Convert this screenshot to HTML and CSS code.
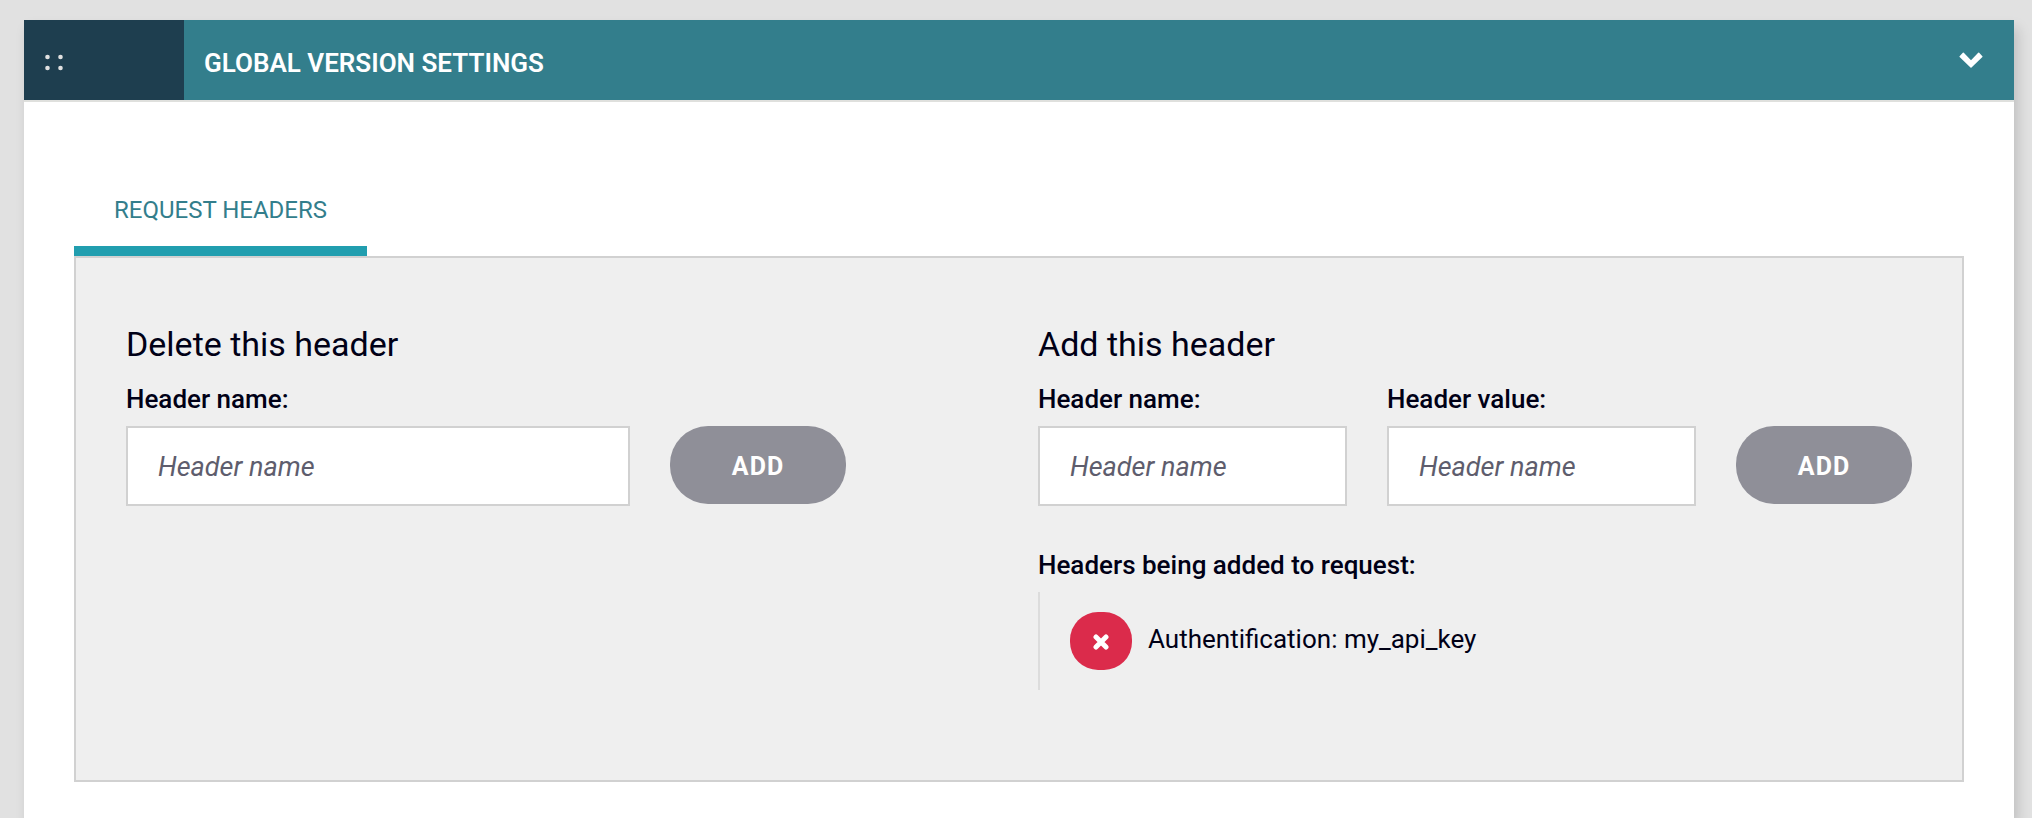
FILE: index.html
```
<!DOCTYPE html>
<html lang="en">
<head>
    <meta charset="UTF-8">
    <meta name="viewport" content="width=device-width, initial-scale=1.0">
    <title>Global version settings</title>
    <link rel="stylesheet" href="styles.css">
</head>
<body>
    <section class="card">
        <header class="card-header">
            <div class="drag-handle">
                <svg width="20" height="18" viewBox="0 0 20 18" fill="#e1e1e1">
                    <circle cx="3.5" cy="3" r="2.3"/>
                    <circle cx="16.5" cy="3" r="2.3"/>
                    <circle cx="3.5" cy="14" r="2.3"/>
                    <circle cx="16.5" cy="14" r="2.3"/>
                </svg>
            </div>
            <h1 class="card-title">GLOBAL VERSION SETTINGS</h1>
            <button class="toggle" type="button" aria-label="Collapse">
                <svg width="24" height="16" viewBox="0 0 24 16">
                    <path d="M0.6 4.2 3.8 0.8Q4.3 0.4 4.8 0.8L12 8.2 19.2 0.8Q19.7 0.4 20.2 0.8L23.4 4.2Q23.8 4.7 23.4 5.1L12.5 15.6Q12 16 11.5 15.6L0.6 5.1Q0.2 4.7 0.6 4.2Z" fill="#fff"/>
                </svg>
            </button>
        </header>

        <div class="card-body">
            <nav class="tabs">
                <a class="tab active" href="#headers">REQUEST HEADERS</a>
            </nav>

            <div class="panel" id="headers">
                <form class="column">
                    <h2 class="column-title">Delete this header</h2>
                    <div class="form-row">
                        <div class="field">
                            <label for="delete-name">Header name:</label>
                            <input type="text" id="delete-name" placeholder="Header name">
                        </div>
                        <button class="add" type="button">ADD</button>
                    </div>
                </form>

                <form class="column">
                    <h2 class="column-title">Add this header</h2>
                    <div class="form-row">
                        <div class="field">
                            <label for="add-name">Header name:</label>
                            <input type="text" id="add-name" placeholder="Header name">
                        </div>
                        <div class="field">
                            <label for="add-value">Header value:</label>
                            <input type="text" id="add-value" placeholder="Header name">
                        </div>
                        <button class="add" type="button">ADD</button>
                    </div>

                    <h3 class="list-title">Headers being added to request:</h3>
                    <ul class="header-list">
                        <li>
                            <button class="remove" type="button" aria-label="Remove">
                                <svg width="16" height="16" viewBox="0 0 16 16">
                                    <path d="M3 3 13 13M13 3 3 13" stroke="#fff" stroke-width="5" stroke-linecap="round"/>
                                </svg>
                            </button>
                            <span class="header-text">Authentification: my_api_key</span>
                        </li>
                    </ul>
                </form>
            </div>
        </div>
    </section>
</body>
</html>
```
FILE: styles.css
```
* {
    box-sizing: border-box;
}

body {
    margin: 0;
    padding: 20px 18px 0 24px;
    background-color: #e1e1e1;
    color: #000016;
    font-family: Roboto, sans-serif;
    font-size: 26px;
    line-height: 32px;
}

h1,
h2,
h3,
ul {
    margin: 0;
    padding: 0;
}

.card {
    min-height: calc(100vh - 20px);
    background-color: white;
    box-shadow: 4px 8px 12px rgba(0, 0, 0, 0.15);
}

.card-header {
    display: flex;
    align-items: stretch;
    height: 82px;
    background-color: #337e8c;
    background-clip: padding-box;
    border-bottom: 2px solid #dfe0dd;
}

.drag-handle {
    display: flex;
    align-items: center;
    width: 160px;
    padding: 6px 20px 0;
    background-color: #1e3e4f;
}

.card-title {
    flex: 1;
    padding: 27px 20px 0;
    color: white;
    font-size: 26px;
    font-weight: 600;
    line-height: 32px;
}

.toggle {
    padding: 2px 31px 0 20px;
    background: none;
    border: none;
    cursor: pointer;
}

.card-body {
    padding: 82px 50px 36px;
}

.tabs {
    display: flex;
}

.tab {
    padding: 10px 40px 20px;
    color: #337e8c;
    font-size: 24px;
    text-decoration: none;
}

.tab.active {
    border-bottom: 10px solid #219eaf;
}

.panel {
    display: grid;
    grid-template-columns: 720fr 874fr;
    column-gap: 192px;
    padding: 66px 50px 90px;
    background-color: #efefef;
    border: 2px solid #d1d1d1;
}

.column-title {
    margin-bottom: 19px;
    font-size: 34px;
    font-weight: 400;
    line-height: 40px;
}

.form-row {
    display: flex;
    align-items: flex-end;
    gap: 40px;
}

.field {
    flex: 1;
    min-width: 0;
}

.field label,
.list-title {
    display: block;
    font-size: 26px;
    font-weight: 500;
    line-height: 32px;
}

.field label {
    margin-bottom: 11px;
}

.field input {
    display: block;
    width: 100%;
    height: 80px;
    padding: 2px 30px 0;
    background-color: white;
    border: 2px solid #d1d1d1;
    color: #000016;
    font-family: inherit;
    font-size: 27px;
}

.field input::placeholder {
    color: #5e5d6d;
    font-style: italic;
    opacity: 1;
}

.add {
    width: 176px;
    height: 78px;
    margin-bottom: 2px;
    padding: 2px 0 0;
    background-color: #8f8f98;
    border: none;
    border-radius: 38px;
    color: white;
    font-family: inherit;
    font-size: 25px;
    font-weight: 700;
    letter-spacing: 1px;
    cursor: pointer;
}

.list-title {
    margin: 43px 0 11px;
}

.header-list {
    border-left: 2px solid #dcdcdc;
    list-style: none;
}

.header-list li {
    display: flex;
    align-items: center;
    gap: 16px;
    padding: 20px 30px;
}

.header-text {
    padding-bottom: 4px;
}

.remove {
    display: flex;
    align-items: center;
    justify-content: center;
    width: 62px;
    height: 58px;
    padding: 2px 0 0;
    background-color: #db2b4b;
    border: none;
    border-radius: 28px;
    cursor: pointer;
}
```
